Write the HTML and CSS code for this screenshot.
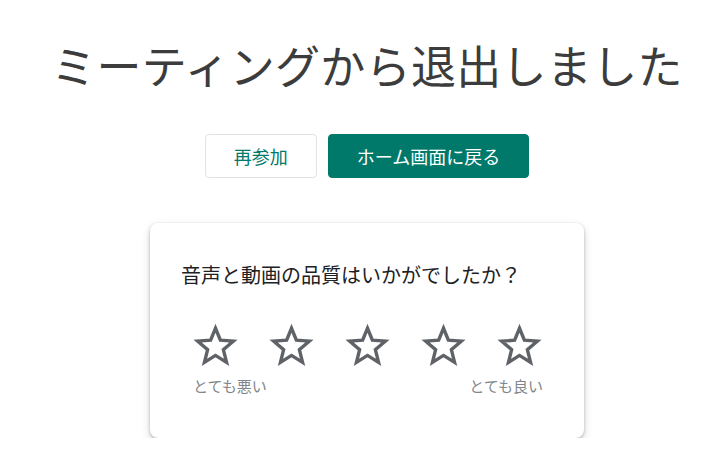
FILE: index.html
```html
<!doctype html>
<html lang="ja">
<head>
<meta charset="utf-8">
<title>ミーティングから退出しました</title>
<link rel="stylesheet" href="styles.css">
</head>
<body>
<div class="page">
  <h1 class="title">ミーティングから退出しました</h1>
  <div class="actions">
    <button class="btn btn-rejoin">再参加</button>
    <button class="btn btn-home">ホーム画面に戻る</button>
  </div>
  <div class="card">
    <p class="question">音声と動画の品質はいかがでしたか？</p>
    <div class="stars">
      <svg class="star" viewBox="0 0 24 24"><path d="M12 2.8l2.6 6.4 6.9.5-5.3 4.5 1.7 6.8L12 17.3 6.1 21l1.7-6.8-5.3-4.5 6.9-.5z"/></svg>
      <svg class="star" viewBox="0 0 24 24"><path d="M12 2.8l2.6 6.4 6.9.5-5.3 4.5 1.7 6.8L12 17.3 6.1 21l1.7-6.8-5.3-4.5 6.9-.5z"/></svg>
      <svg class="star" viewBox="0 0 24 24"><path d="M12 2.8l2.6 6.4 6.9.5-5.3 4.5 1.7 6.8L12 17.3 6.1 21l1.7-6.8-5.3-4.5 6.9-.5z"/></svg>
      <svg class="star" viewBox="0 0 24 24"><path d="M12 2.8l2.6 6.4 6.9.5-5.3 4.5 1.7 6.8L12 17.3 6.1 21l1.7-6.8-5.3-4.5 6.9-.5z"/></svg>
      <svg class="star" viewBox="0 0 24 24"><path d="M12 2.8l2.6 6.4 6.9.5-5.3 4.5 1.7 6.8L12 17.3 6.1 21l1.7-6.8-5.3-4.5 6.9-.5z"/></svg>
    </div>
    <div class="labels">
      <span>とても悪い</span>
      <span>とても良い</span>
    </div>
  </div>
</div>
</body>
</html>
```

FILE: styles.css
```css
body {
  margin: 0;
  background: white;
  font-family: "Noto Sans CJK JP", "Noto Sans", sans-serif;
  color: #3c4043;
}

.page {
  display: flex;
  flex-direction: column;
  align-items: center;
  padding-top: 33px;
  padding-left: 14px;
}

.title {
  margin: 0;
  font-size: 45px;
  font-weight: 400;
  line-height: 64px;
  color: #3c3c3c;
  letter-spacing: 0.3px;
}

.actions {
  display: flex;
  gap: 11px;
  margin-top: 37px;
}

.btn {
  height: 44px;
  border-radius: 4px;
  font-family: inherit;
  font-size: 18px;
  padding: 0 28px;
  cursor: pointer;
}

.btn-rejoin {
  background: white;
  border: 1px solid #e3e3e3;
  color: #00796b;
}

.btn-home {
  background: #00796b;
  border: 1px solid #00796b;
  color: white;
}

.card {
  margin-top: 45px;
  width: 434px;
  height: 215px;
  box-sizing: border-box;
  border-radius: 8px;
  box-shadow: 0 1px 3px rgba(0, 0, 0, 0.25), 0 4px 10px rgba(0, 0, 0, 0.15);
  padding: 37px 30px 0 31px;
}

.question {
  margin: 0;
  font-size: 20px;
  line-height: 30px;
  color: #202124;
}

.stars {
  display: flex;
  gap: 31px;
  margin-top: 33px;
  padding-left: 12px;
}

.star {
  width: 45px;
  height: 45px;
}

.star path {
  fill: none;
  stroke: #5f6368;
  stroke-width: 1.8;
  stroke-linejoin: miter;
}

.labels {
  display: flex;
  justify-content: space-between;
  margin-top: 7px;
  padding: 0 11px 0 12px;
  font-size: 15px;
  color: #80868b;
}
```
